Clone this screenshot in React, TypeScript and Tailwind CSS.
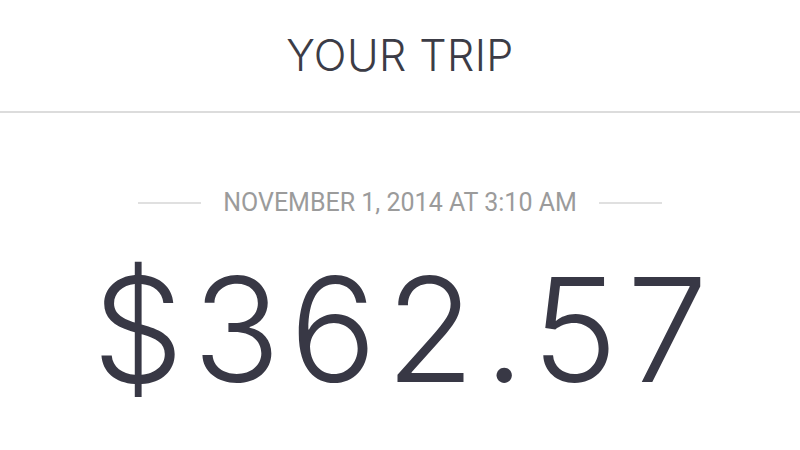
import React from 'react';

export default function App() {
    return (
        <div className="w-[800px] h-[450px] bg-white overflow-hidden flex flex-col" style={{ fontFamily: 'Inter, "Open Sans", sans-serif' }}>
            {/* --- Header --- */}
            <div className="h-[113px] flex items-center justify-center border-b-2 border-[#dcdcdc]">
                <h1 className="text-[43px] font-light text-[#3c3c46] tracking-[0.01em] leading-none">
                    YOUR TRIP
                </h1>
            </div>

            {/* --- Date --- */}
            <div className="mt-[77px] flex items-center justify-center gap-[22px]">
                <div className="w-[63px] h-[2px] bg-[#e0e0e0]"></div>
                <div className="text-[25px] text-[#9b9b9b] leading-none" style={{ fontFamily: 'Roboto, sans-serif' }}>
                    NOVEMBER 1, 2014 AT 3:10 AM
                </div>
                <div className="w-[63px] h-[2px] bg-[#e0e0e0]"></div>
            </div>

            {/* --- Amount --- */}
            <div className="mt-[42px] flex justify-center">
                <div className="text-[145px] font-light text-[#383845] leading-none tracking-[9px] mr-[-9px]">
                    $362.57
                </div>
            </div>
        </div>
    );
}
